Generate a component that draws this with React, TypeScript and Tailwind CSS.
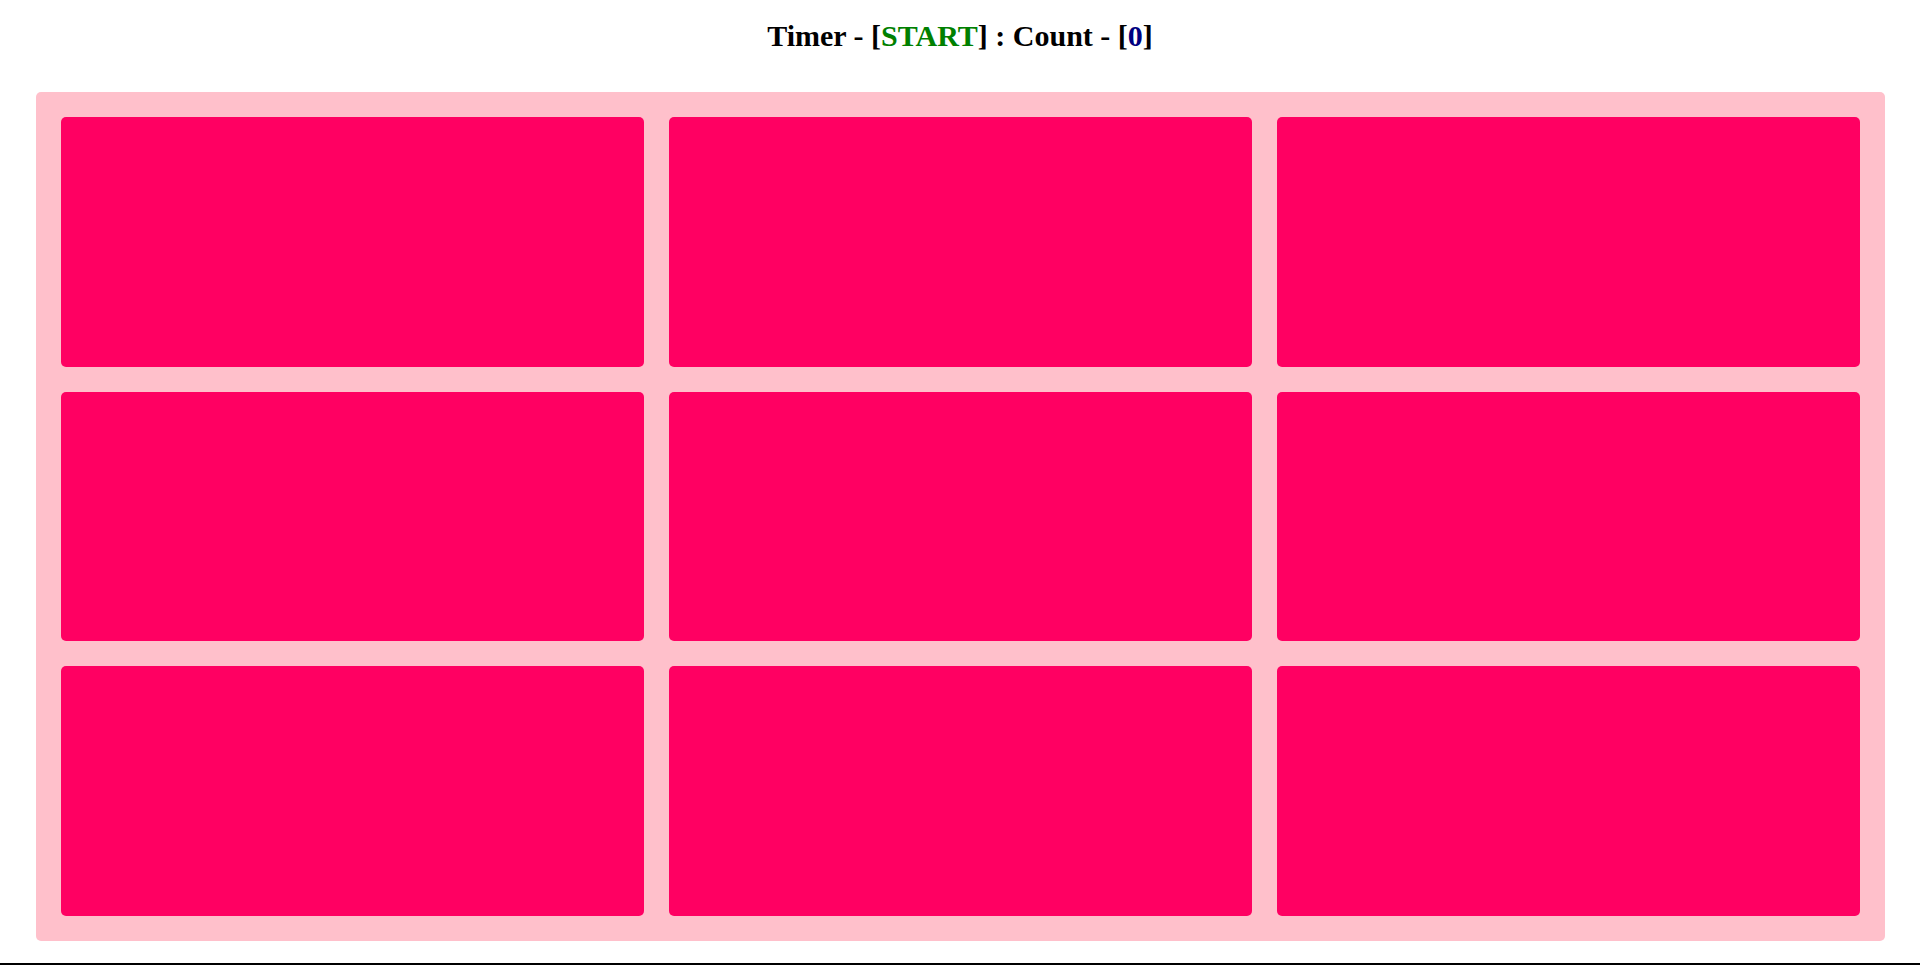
import React from "react";

export default function App() {
  const tiles = Array.from({ length: 9 });
  return (
    <div className="h-[965px] w-[1920px] bg-white flex flex-col overflow-hidden" style={{ fontFamily: '"Liberation Serif", "Times New Roman", serif' }}>
      <div className="pt-[20px] h-[92px] text-center">
        <h1 className="text-[30px] leading-[32px] font-bold text-black">
          Timer - [<span className="text-[#008000]">START</span>] : Count - [<span className="text-[#000080]">0</span>]
        </h1>
      </div>
      <div className="mx-[36px] w-[1849px] h-[849px] bg-[#ffc0cb] rounded-[5px] p-[25px] grid grid-cols-3 grid-rows-3 gap-[25px]">
        {tiles.map((_, i) => (
          <div key={i} className="bg-[#ff0062] rounded-[5px]" />
        ))}
      </div>
      <div className="flex-1" />
      <div className="h-[2px] bg-black" />
    </div>
  );
}
